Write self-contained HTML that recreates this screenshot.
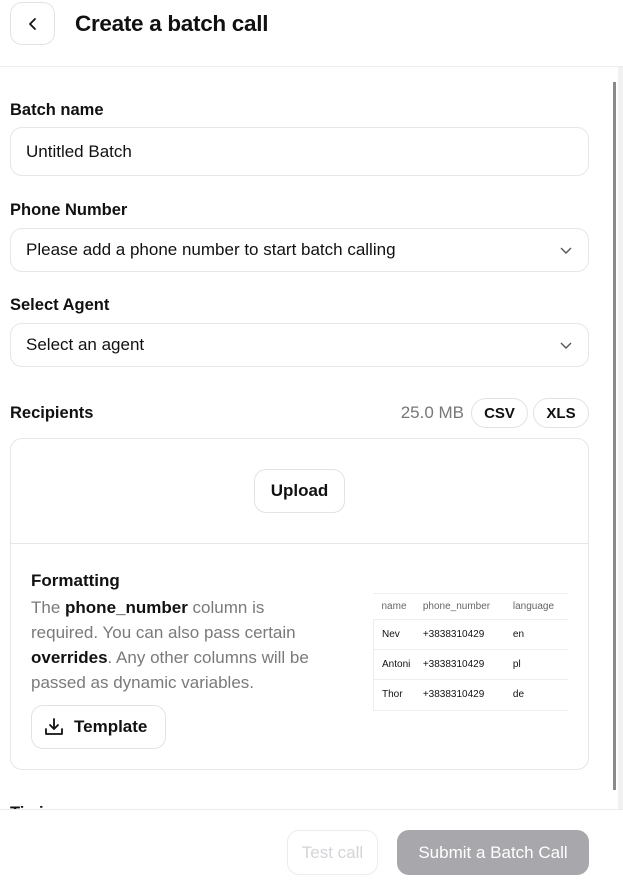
<!DOCTYPE html>
<html><head><style>
*{box-sizing:border-box;margin:0;padding:0}
body{width:623px;height:880px;overflow:hidden;background:#fff;font-family:"Liberation Sans",sans-serif;color:#111;position:relative}
.abs{position:absolute}
.lbl{position:absolute;left:10px;font-size:16.5px;font-weight:600;color:#111}
.field{position:absolute;left:10px;width:579px;border:1px solid #e6e6e6;border-radius:12px;font-size:17px;padding-left:15px;display:flex;align-items:center;color:#111}
.chev{position:absolute;right:16px;top:50%;margin-top:-5px}
.btn{position:absolute;border:1px solid #e3e3e3;border-radius:12px;background:#fff;display:flex;align-items:center;justify-content:center;font-weight:600;color:#111}
table{border-collapse:collapse;font-size:10px}
</style></head><body>
<div class="btn" style="left:10px;top:2px;width:45px;height:43px">
<svg width="14" height="14" viewBox="0 0 14 14"><path d="M9 2 L4 7 L9 12" fill="none" stroke="#111" stroke-width="1.8" stroke-linecap="round" stroke-linejoin="round"/></svg></div>
<div class="abs" style="left:75px;top:11px;font-size:22.5px;font-weight:600;letter-spacing:-0.3px">Create a batch call</div>
<div class="abs" style="left:0;top:66px;width:623px;height:1px;background:#ececec"></div>
<div class="abs" style="left:618px;top:67px;width:5px;height:742px;background:#f1f1f1"></div>
<div class="abs" style="left:613px;top:82px;width:3px;height:708px;background:#8a8a8a"></div>

<div class="lbl" style="top:101px">Batch name</div>
<div class="field" style="top:127px;height:49px">Untitled Batch</div>
<div class="lbl" style="top:201px">Phone Number</div>
<div class="field" style="top:228px;height:44px">Please add a phone number to start batch calling
<svg class="chev" width="12" height="10" viewBox="0 0 12 10"><path d="M1 3 L6 8 L11 3" fill="none" stroke="#555" stroke-width="1.4"/></svg></div>
<div class="lbl" style="top:296px">Select Agent</div>
<div class="field" style="top:323px;height:44px">Select an agent
<svg class="chev" width="12" height="10" viewBox="0 0 12 10"><path d="M1 3 L6 8 L11 3" fill="none" stroke="#555" stroke-width="1.4"/></svg></div>

<div class="lbl" style="top:404px">Recipients</div>
<div class="abs" style="left:397px;top:403px;font-size:17px;color:#777;width:67px;text-align:right">25.0 MB</div>
<div class="btn" style="left:471px;top:398px;width:57px;height:30px;border-radius:15px;font-size:15px">CSV</div>
<div class="btn" style="left:533px;top:398px;width:56px;height:30px;border-radius:15px;font-size:15px">XLS</div>

<div class="abs" style="left:10px;top:438px;width:579px;height:332px;border:1px solid #e6e6e6;border-radius:12px"></div>
<div class="btn" style="left:254px;top:469px;width:91px;height:44px;font-size:17px">Upload</div>
<div class="abs" style="left:11px;top:543px;width:577px;height:1px;background:#e6e6e6"></div>
<div class="abs" style="left:31px;top:571px;font-size:17px;font-weight:600">Formatting</div>
<div class="abs" style="left:31px;top:595px;white-space:nowrap;font-size:17px;line-height:25px;color:#7a7a7a">The <b style="color:#111;font-weight:600">phone_number</b> column is<br>required. You can also pass certain<br><b style="color:#111;font-weight:600">overrides</b>. Any other columns will be<br>passed as dynamic variables.</div>
<div class="btn" style="left:31px;top:705px;width:135px;height:44px;font-size:17px;justify-content:flex-start;padding-left:12px">
<svg width="20" height="20" viewBox="0 0 20 20" style="margin-right:10px"><path d="M10 2 V12 M6 8 L10 12 L14 8 M2 12 V17 H18 V12" fill="none" stroke="#111" stroke-width="1.8" stroke-linecap="round" stroke-linejoin="round"/></svg>Template</div>

<div class="abs" style="left:373px;top:593px;width:195px;border-top:1px solid #eee">
<table style="width:195px">
<tr style="height:25px;color:#666"><td style="padding-left:8px">name</td><td>phone_number</td><td>language</td></tr>
<tr style="height:30px;border-top:1px solid #eee;border-left:1px solid #eee"><td style="padding-left:8px">Nev</td><td>+3838310429</td><td>en</td></tr>
<tr style="height:30px;border-top:1px solid #eee;border-left:1px solid #eee"><td style="padding-left:8px">Antoni</td><td>+3838310429</td><td>pl</td></tr>
<tr style="height:31px;border-top:1px solid #eee;border-bottom:1px solid #eee;border-left:1px solid #eee"><td style="padding-left:8px">Thor</td><td>+3838310429</td><td>de</td></tr>
</table></div>

<div class="abs" style="left:10px;top:803px;font-size:16.5px;font-weight:600;height:6px;overflow:hidden;line-height:20px">Timing</div>
<div class="abs" style="left:0;top:809px;width:623px;height:1px;background:#ececec"></div>
<div class="btn" style="left:287px;top:830px;width:91px;height:45px;font-size:17px;font-weight:400;color:#d4d4d8;border-color:#ececec">Test call</div>
<div class="btn" style="left:397px;top:830px;width:192px;height:45px;font-size:17px;font-weight:400;background:#a7a7ac;border-color:#a7a7ac;color:#fff">Submit a Batch Call</div>
</body></html>
